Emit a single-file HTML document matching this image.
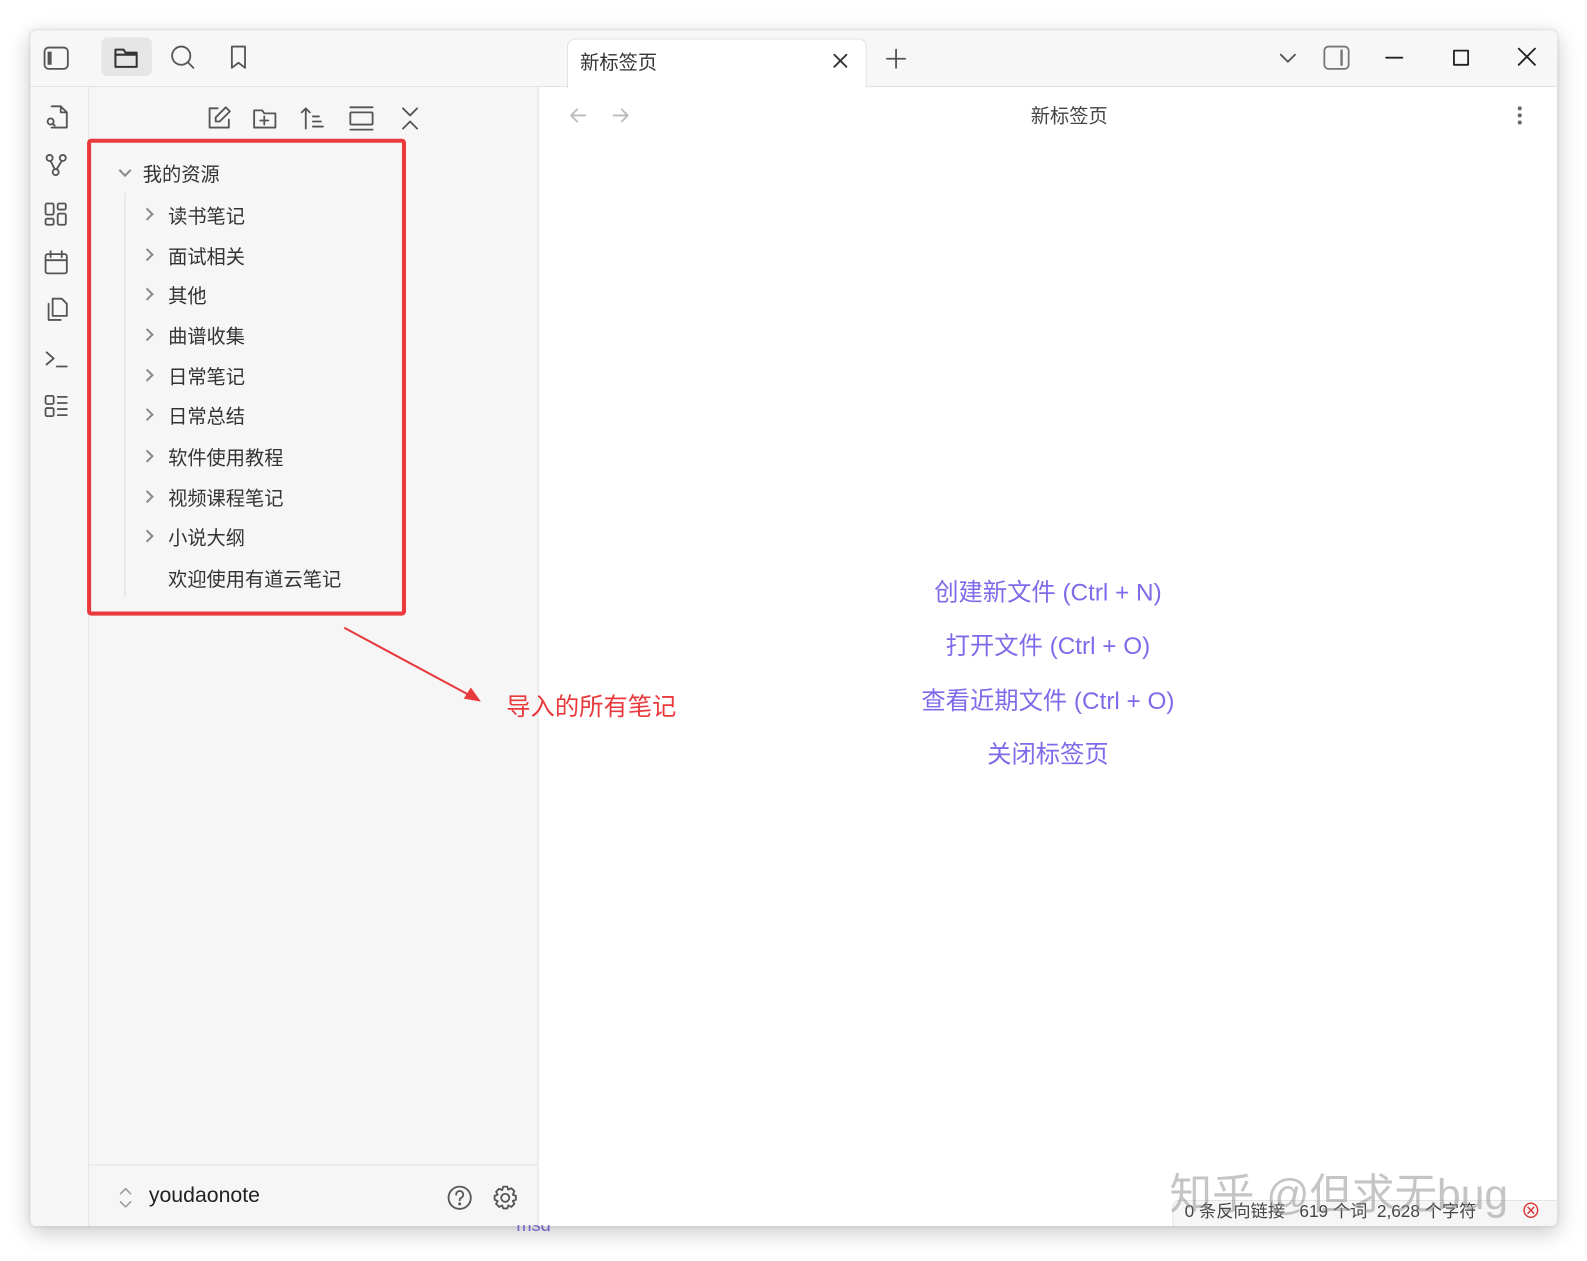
<!DOCTYPE html>
<html><head><meta charset="utf-8"><style>
*{margin:0;padding:0;box-sizing:border-box}
html,body{width:1587px;height:1261px;overflow:hidden;background:#fff}
body{font-family:"Liberation Sans","Noto Sans CJK SC",sans-serif}
#s{position:absolute;left:0;top:0;width:1560px;height:1240px;transform:scale(1.0125);transform-origin:0 0}
.win{position:absolute;left:30px;top:30px;width:1508px;height:1181px;background:#fff;border-radius:6px;box-shadow:0 6px 22px rgba(0,0,0,.22),0 0 3px rgba(0,0,0,.15);overflow:hidden}
.abs{position:absolute}
svg.i{position:absolute;fill:none;stroke:#555;stroke-width:1.8;stroke-linecap:round;stroke-linejoin:round}
.topl{left:0;top:0;width:502px;height:56px;background:#f7f7f7;border-bottom:1px solid #e2e2e2}
.topr{left:502px;top:0;width:1006px;height:56px;background:#f7f7f7;border-bottom:1px solid #e2e2e2}
.rib{left:0;top:56px;width:58px;height:1125px;background:#f7f7f7;border-right:1px solid #e4e4e4}
.side{left:58px;top:56px;width:444px;height:1125px;background:#f6f6f6;border-right:1px solid #e2e2e2}
.tab{left:530px;top:8px;width:296px;height:49px;background:#fff;border:1px solid #e2e2e2;border-bottom:none;border-radius:8px 8px 0 0}
.tree div{position:absolute;font-size:19px;color:#333;white-space:nowrap}
.chev{position:absolute;width:9px;height:9px;border-right:2px solid #8a8a8a;border-bottom:2px solid #8a8a8a;transform:rotate(-45deg)}
.link{position:absolute;left:502px;width:1006px;text-align:center;color:#7d6bea;font-size:24px}
</style></head><body><div id="s">
<div class="win">
<div class="abs topl"></div><div class="abs topr"></div>
<div class="abs rib"></div><div class="abs side"></div>
<div class="abs" style="left:70px;top:7px;width:50px;height:38px;background:#e6e6e6;border-radius:6px"></div>
<svg class="i" style="left:12px;top:14px" width="28" height="28"><rect x="2" y="3" width="23" height="21" rx="4"/><rect x="5" y="7" width="4" height="13" fill="#555" stroke="none"/></svg>
<svg class="i" style="left:81px;top:13px" width="28" height="28"><path d="M3 6h8l2 3h11v14H3z M3 11h21" stroke="#333" stroke-width="2"/></svg>
<svg class="i" style="left:137px;top:13px" width="28" height="28"><circle cx="12" cy="12" r="9"/><path d="M19 19l5 5"/></svg>
<svg class="i" style="left:192px;top:13px" width="28" height="28"><path d="M7 3h13v21l-6.5-5L7 24z"/></svg>
<div class="abs tab"></div>
<div class="abs" style="left:543px;top:17px;font-size:19px;color:#333">新标签页</div>
<svg class="i" style="left:790px;top:20px" width="20" height="20"><path d="M4 4l12 12M16 4L4 16" stroke="#333"/></svg>
<svg class="i" style="left:843px;top:16px" width="24" height="24"><path d="M12 3v18M3 12h18"/></svg>
<svg class="i" style="left:1232px;top:19px" width="20" height="16"><path d="M3 5l7 7 7-7"/></svg>
<svg class="i" style="left:1275px;top:13px" width="30" height="28"><rect x="3" y="3" width="24" height="22" rx="4" stroke="#777"/><path d="M20 7v14" stroke="#777" stroke-width="2.4"/></svg>
<svg class="i" style="left:1335px;top:15px" width="24" height="24"><path d="M4 12h16" stroke="#222"/></svg>
<svg class="i" style="left:1401px;top:15px" width="24" height="24"><rect x="5" y="5" width="14" height="14" stroke="#222"/></svg>
<svg class="i" style="left:1466px;top:14px" width="24" height="24"><path d="M4 4l16 16M20 4L4 20" stroke="#222"/></svg>
<svg class="i" style="left:530px;top:73px" width="22" height="22"><path d="M18 11H4M10 5l-6 6 6 6" stroke="#bbb"/></svg>
<svg class="i" style="left:572px;top:73px" width="22" height="22"><path d="M4 11h14M12 5l6 6-6 6" stroke="#bbb"/></svg>
<div class="abs" style="left:988px;top:70px;font-size:19px;color:#444">新标签页</div>
<div class="abs" style="left:1469px;top:75px;width:4px;height:4px;border-radius:2px;background:#666;box-shadow:0 7px 0 #666,0 14px 0 #666"></div>
<svg class="i" style="left:12px;top:72px" width="28" height="28"><path d="M9 3h9l6 6v15H9" /><path d="M18 3v6h6"/><circle cx="8" cy="18" r="3"/><path d="M10 20l2 2"/></svg>
<svg class="i" style="left:12px;top:120px" width="28" height="28"><circle cx="7" cy="6" r="3"/><circle cx="20" cy="6" r="3"/><circle cx="13" cy="20" r="3"/><path d="M8 9l4 8M19 9l-5 8"/></svg>
<svg class="i" style="left:12px;top:168px" width="28" height="28"><rect x="3" y="3" width="8" height="11" rx="1.5"/><rect x="15" y="3" width="8" height="6" rx="1.5"/><rect x="3" y="18" width="8" height="6" rx="1.5"/><rect x="15" y="13" width="8" height="11" rx="1.5"/></svg>
<svg class="i" style="left:12px;top:216px" width="28" height="28"><rect x="3" y="5" width="21" height="19" rx="2"/><path d="M3 11h21M8 2v6M19 2v6"/></svg>
<svg class="i" style="left:12px;top:262px" width="28" height="28"><path d="M10 3h9l5 5v12H10z"/><path d="M6 8v16h12"/></svg>
<svg class="i" style="left:12px;top:310px" width="28" height="28"><path d="M4 8l7 6-7 6M14 22h10"/></svg>
<svg class="i" style="left:12px;top:357px" width="28" height="28"><rect x="3" y="4" width="8" height="8" rx="1.5"/><rect x="3" y="16" width="8" height="8" rx="1.5"/><path d="M15 5h9M15 11h9M15 17h9M15 23h9"/></svg>
<svg class="i" style="left:172px;top:73px" width="28" height="28"><path d="M13 4H5v19h19v-8"/><path d="M21 3l4 4-10 10h-4v-4z"/></svg>
<svg class="i" style="left:218px;top:73px" width="28" height="28"><path d="M3 6h8l2 3h11v14H3z"/><path d="M13 12v8M9 16h8"/></svg>
<svg class="i" style="left:265px;top:73px" width="28" height="28"><path d="M7 24V4M3 8l4-4 4 4M14 12h6M14 17h8M14 22h10"/></svg>
<svg class="i" style="left:313px;top:73px" width="28" height="28"><path d="M3 3h22M3 25h22"/><rect x="3" y="8" width="22" height="12" rx="1"/></svg>
<svg class="i" style="left:363px;top:73px" width="24" height="28"><path d="M5 4l7 7 7-7M5 24l7-7 7 7"/></svg>
<div class="tree">
<div class="chev" style="left:89px;top:134px;transform:rotate(45deg)"></div>
<div style="left:111px;top:128px">我的资源</div>
<div class="abs" style="left:93px;top:160px;width:1px;height:400px;background:#ddd"></div>
<div class="chev" style="left:111px;top:177px"></div><div style="left:136px;top:169px">读书笔记</div>
<div class="chev" style="left:111px;top:217px"></div><div style="left:136px;top:209px">面试相关</div>
<div class="chev" style="left:111px;top:256px"></div><div style="left:136px;top:248px">其他</div>
<div class="chev" style="left:111px;top:296px"></div><div style="left:136px;top:288px">曲谱收集</div>
<div class="chev" style="left:111px;top:336px"></div><div style="left:136px;top:328px">日常笔记</div>
<div class="chev" style="left:111px;top:375px"></div><div style="left:136px;top:367px">日常总结</div>
<div class="chev" style="left:111px;top:416px"></div><div style="left:136px;top:408px">软件使用教程</div>
<div class="chev" style="left:111px;top:456px"></div><div style="left:136px;top:448px">视频课程笔记</div>
<div class="chev" style="left:111px;top:495px"></div><div style="left:136px;top:487px">小说大纲</div>
<div style="left:136px;top:528px">欢迎使用有道云笔记</div>
</div>
<div class="abs" style="left:56px;top:107px;width:315px;height:471px;border:4px solid #ea3a3d;border-radius:4px"></div>
<svg class="abs" style="left:300px;top:580px" width="160" height="100"><path d="M10 10L140 80" stroke="#e83a3c" stroke-width="2"/><path d="M145 83L128 80L135 69z" fill="#e83a3c"/></svg>
<div class="abs" style="left:470px;top:648px;font-size:24px;color:#e83a3c">导入的所有笔记</div>
<div class="link" style="top:535px">创建新文件 (Ctrl + N)</div>
<div class="link" style="top:588px">打开文件 (Ctrl + O)</div>
<div class="link" style="top:642px">查看近期文件 (Ctrl + O)</div>
<div class="link" style="top:695px">关闭标签页</div>
<div class="abs" style="left:58px;top:1120px;width:444px;height:1px;background:#e2e2e2"></div>
<svg class="i" style="left:84px;top:1140px" width="20" height="26"><path d="M5 9l5-5 5 5M5 17l5 5 5-5" stroke="#999" stroke-width="1.5"/></svg>
<div class="abs" style="left:117px;top:1139px;font-size:21px;color:#222">youdaonote</div>
<svg class="i" style="left:410px;top:1139px" width="28" height="28"><circle cx="14" cy="14" r="11"/><path d="M10.5 11a3.5 3.5 0 1 1 5 3c-1 .6-1.5 1.2-1.5 2.5"/><circle cx="14" cy="20" r=".6" fill="#555"/></svg>
<svg class="i" style="left:455px;top:1139px" width="28" height="28"><circle cx="14" cy="14" r="4"/><path d="M12 3h4l1 3 3-1.5 3 3L21.5 11l3 1v4l-3 1 1.5 3-3 3-3-1.5-1 3h-4l-1-3-3 1.5-3-3L6.5 17l-3-1v-4l3-1L5 8l3-3 3 1.5z"/></svg>
<div class="abs" style="left:1128px;top:1155px;width:380px;height:26px;background:#f6f6f6;border-top:1px solid #e2e2e2;border-left:1px solid #e2e2e2;border-radius:6px 0 0 0"></div>
<div class="abs" style="left:1140px;top:1152px;font-size:17px;color:#444;white-space:nowrap">0 条反向链接&nbsp;&nbsp;&nbsp;619 个词&nbsp;&nbsp;2,628 个字符</div>
<div class="abs" style="left:1125px;top:1116px;font-size:42px;color:rgba(140,140,140,.5);white-space:nowrap">知乎 @但求无bug</div>
<div class="abs" style="left:1472px;top:1150px;font-size:20px;color:#d33;">⊗</div>
</div>
<div class="abs" style="left:510px;top:1210px;font-size:18px;color:#7061c9;height:6px;overflow:hidden;line-height:0">msg</div>
</div></body></html>
